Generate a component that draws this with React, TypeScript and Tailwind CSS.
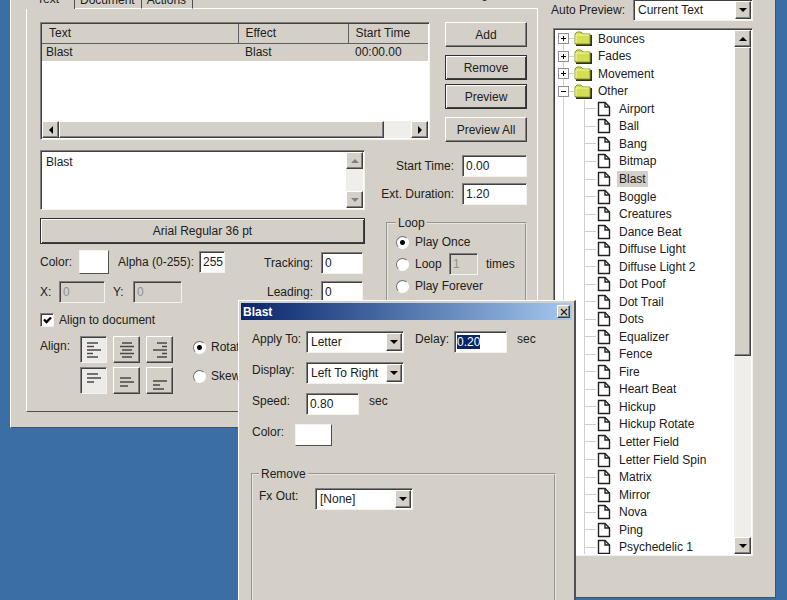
import React, { useEffect, useRef, useState } from 'react';

const RAISED = 'bg-[#d4d0c8] border border-t-white border-l-white border-r-[#404040] border-b-[#404040] shadow-[inset_-1px_-1px_0_#808080]';
const SUNKEN = 'border border-t-[#808080] border-l-[#808080] border-r-[#f4f2ee] border-b-[#f4f2ee] shadow-[inset_1px_1px_0_#404040]';
const DEFAULT_BTN = 'bg-[#d4d0c8] border border-[#303030] shadow-[inset_1px_1px_0_#fff,inset_-1px_-1px_0_#404040]';
const RADIO =
  'appearance-none w-[13px] h-[13px] shrink-0 rounded-full bg-white border border-t-[#707070] border-l-[#707070] border-r-white border-b-white checked:bg-[radial-gradient(circle,#000_2px,#fff_3px)]';

const folders = ['Bounces', 'Fades', 'Movement', 'Other'];

const effects = [
  'Airport', 'Ball', 'Bang', 'Bitmap', 'Blast', 'Boggle', 'Creatures', 'Dance Beat',
  'Diffuse Light', 'Diffuse Light 2', 'Dot Poof', 'Dot Trail', 'Dots', 'Equalizer',
  'Fence', 'Fire', 'Heart Beat', 'Hickup', 'Hickup Rotate', 'Letter Field',
  'Letter Field Spin', 'Matrix', 'Mirror', 'Nova', 'Ping', 'Psychedelic 1',
];

type Dir = 'up' | 'down' | 'left' | 'right';

const arrows: Record<Dir, string> = {
  up: 'M0 6 L4 2 L8 6 Z',
  down: 'M0 2 L8 2 L4 6 Z',
  left: 'M6 0 L2 4 L6 8 Z',
  right: 'M2 0 L6 4 L2 8 Z',
};

function Arrow({ dir, muted }: { dir: Dir; muted?: boolean }) {
  return (
    <svg width="8" height="8" viewBox="0 0 8 8">
      <path d={arrows[dir]} fill={muted ? '#808080' : '#000'} />
    </svg>
  );
}

function ScrollButton({ dir, muted }: { dir: Dir; muted?: boolean }) {
  return (
    <button
      type="button"
      aria-label={`Scroll ${dir}`}
      disabled={muted}
      className={`flex h-[17px] w-[17px] shrink-0 items-center justify-center ${RAISED}`}
    >
      <Arrow dir={dir} muted={muted} />
    </button>
  );
}

function Select({ id, options, className }: { id: string; options: string[]; className: string }) {
  return (
    <div className={`relative h-[22px] bg-white p-px ${SUNKEN} ${className}`}>
      <select id={id} className="h-full w-full appearance-none pl-[3px] pr-4 outline-none">
        {options.map((o) => (
          <option key={o}>{o}</option>
        ))}
      </select>
      <span className={`pointer-events-none absolute inset-y-px right-px flex w-4 items-center justify-center ${RAISED}`}>
        <Arrow dir="down" />
      </span>
    </div>
  );
}

function Field({ id, value, disabled, className }: { id: string; value: string; disabled?: boolean; className: string }) {
  return (
    <input
      id={id}
      type="text"
      defaultValue={value}
      disabled={disabled}
      className={`h-[22px] min-w-0 pl-[3px] outline-none ${SUNKEN} ${disabled ? 'bg-[#d4d0c8] text-[#909090]' : 'bg-white'} ${className}`}
    />
  );
}

// each line is an x1/x2 pair, top to bottom
const alignIcons = [
  { name: 'Left', lines: [[1, 12], [1, 8], [1, 15], [1, 7], [1, 12]], top: 2, step: 3.5 },
  { name: 'Center', lines: [[3, 13], [1, 15], [3, 13], [1, 15], [3, 13]], top: 2, step: 3.5 },
  { name: 'Right', lines: [[5, 15], [10, 15], [1, 15], [10, 15], [5, 15]], top: 2, step: 3.5 },
  { name: 'Top', lines: [[1, 12], [1, 15], [1, 8]], top: 2, step: 4 },
  { name: 'Middle', lines: [[1, 12], [1, 15], [1, 9]], top: 6, step: 4 },
  { name: 'Bottom', lines: [[1, 15], [1, 8], [1, 12]], top: 9, step: 4 },
];

function AlignButton({ index }: { index: number }) {
  const { name, lines, top, step } = alignIcons[index];
  const pressed = index % 3 === 0;
  return (
    <button
      type="button"
      aria-label={`Align ${name}`}
      aria-pressed={pressed}
      className={`flex h-[27px] w-[27px] items-center justify-center ${pressed ? `bg-[#ecebe7] ${SUNKEN}` : RAISED}`}
    >
      <svg width="16" height="18" viewBox="0 0 16 18" stroke="#484848" strokeWidth="1.5">
        {lines.map(([x1, x2], i) => (
          <path key={i} d={`M${x1} ${top + i * step} H${x2}`} />
        ))}
      </svg>
    </button>
  );
}

function Tree() {
  return (
    <div className={`flex h-[528px] bg-white p-px ${SUNKEN}`}>
      <div className="min-w-0 flex-1 overflow-hidden">
        <ul className="flex h-[526px] flex-col leading-[14px]">
          {folders.map((name, i) => (
            <li key={name} className="flex flex-1 items-center">
              <div className="ml-[3px] grid h-full w-[11px] items-center justify-items-center">
                <span className={`col-start-1 row-start-1 w-px bg-[#d0d0d0] ${i === 0 ? 'h-1/2 self-end' : 'h-full'}`} />
                <button
                  type="button"
                  aria-label={`Toggle ${name}`}
                  className="col-start-1 row-start-1 h-[11px] w-[11px] border border-[#909090] bg-white"
                >
                  <svg width="9" height="9" viewBox="0 0 9 9" stroke="#000">
                    <path d={i === 3 ? 'M2 4.5 H7' : 'M2 4.5 H7 M4.5 2 V7'} />
                  </svg>
                </button>
              </div>
              <span className="h-px w-[5px] bg-[#d0d0d0]" />
              <svg width="18" height="15" viewBox="0 0 18 15">
                <path d="M2 14 H17 V4" fill="none" stroke="#303010" strokeWidth="2" />
                <path d="M1 13 V3 L3 1 H7 L9 3 H16 V13 Z" fill="#d3df52" stroke="#8c9430" />
                <path d="M2 12 V4 H15" fill="none" stroke="#f4f8b0" />
              </svg>
              <span className="ml-1 px-[2px]">{name}</span>
            </li>
          ))}
          {effects.map((name) => (
            <li key={name} className="flex flex-1 items-center whitespace-nowrap">
              <span className="ml-2 w-[21px] self-stretch border-l border-[#d0d0d0]" />
              <span className="w-px self-stretch bg-[#d0d0d0]" />
              <span className="mr-px h-px w-[11px] bg-[#d0d0d0]" />
              <svg width="14" height="16" viewBox="0 0 14 16">
                <path d="M1.5 1.5 H8 L12.5 6 V14.5 H1.5 Z" fill="#fff" stroke="#202020" strokeWidth="1.4" />
                <path d="M8 1.5 V6 H12.5" fill="none" stroke="#202020" strokeWidth="1.4" />
              </svg>
              <span className={`ml-[6px] px-[2px] ${name === 'Blast' ? 'bg-[#d4d0c8] py-px' : ''}`}>{name}</span>
            </li>
          ))}
        </ul>
      </div>
      <div className="flex w-[17px] flex-col bg-[#efeeea]">
        <ScrollButton dir="up" />
        <div className={`h-[309px] ${RAISED}`} />
        <div className="flex-1" />
        <ScrollButton dir="down" />
      </div>
    </div>
  );
}

function EffectsWindow() {
  return (
    <div className="absolute -top-5 left-[540px] right-[11px] border-b border-r border-[#505050] bg-[#d4d0c8] pb-[41px] pl-[13px] pr-[22px] pt-[19px]">
      <div className="mb-[7px] flex items-center justify-between">
        <label htmlFor="auto-preview" className="-ml-[2px] whitespace-nowrap">Auto Preview:</label>
        <Select id="auto-preview" options={['Current Text', 'All Text']} className="w-[120px]" />
      </div>
      <Tree />
    </div>
  );
}

function TextList() {
  return (
    <div className={`flex h-[118px] flex-1 flex-col bg-white p-px ${SUNKEN}`}>
      <table className="w-full table-fixed border-collapse text-left">
        <thead>
          <tr className="h-[19px] bg-[#d4d0c8]">
            <th className="w-[196px] border-b border-r border-[#606060] pl-[7px] font-normal">Text</th>
            <th className="w-[110px] border-b border-r border-[#606060] pl-[7px] font-normal">Effect</th>
            <th className="border-b border-[#606060] pl-[7px] font-normal">Start Time</th>
          </tr>
        </thead>
        <tbody>
          <tr className="h-[18px] bg-[#d4d0c8]">
            <td className="pl-1">Blast</td>
            <td className="pl-[7px]">Blast</td>
            <td className="pl-[7px]">00:00.00</td>
          </tr>
        </tbody>
      </table>
      <div className="mt-auto flex bg-[#efeeea]">
        <ScrollButton dir="left" />
        <div className={`flex-1 ${RAISED}`} />
        <div className="w-[27px]" />
        <ScrollButton dir="right" />
      </div>
    </div>
  );
}

function TextOptions() {
  return (
    <div className="w-[325px]">
      <div className={`flex h-[60px] bg-white p-px ${SUNKEN}`}>
        <textarea aria-label="Text" defaultValue="Blast" className="flex-1 resize-none pl-1 pt-[2px] outline-none" />
        <div className="flex flex-col justify-between bg-[#efeeea]">
          <ScrollButton dir="up" muted />
          <ScrollButton dir="down" muted />
        </div>
      </div>
      <button type="button" className={`mt-2 h-[26px] w-full ${DEFAULT_BTN}`}>Arial Regular 36 pt</button>

      <div className="mt-[6px] flex justify-between pr-[2px]">
        <div>
          <div className="flex h-6 items-center">
            <label htmlFor="color" className="w-[39px]">Color:</label>
            <button id="color" type="button" aria-label="Text color" className="h-6 w-[30px] border border-b-[#505050] border-l-[#f4f2ee] border-r-[#505050] border-t-[#f4f2ee] bg-white" />
            <label htmlFor="alpha" className="ml-[9px] w-[81px] whitespace-nowrap">Alpha (0-255):</label>
            <Field id="alpha" value="255" className="w-[26px]" />
          </div>
          <div className="mt-[7px] flex items-center">
            <label htmlFor="pos-x" className="w-[19px]">X:</label>
            <Field id="pos-x" value="0" disabled className="w-[46px]" />
            <label htmlFor="pos-y" className="ml-2 w-5">Y:</label>
            <Field id="pos-y" value="0" disabled className="w-[49px]" />
          </div>
        </div>
        <div className="flex flex-col items-end gap-[7px] pt-[2px]">
          <div className="flex items-center gap-2">
            <label htmlFor="tracking">Tracking:</label>
            <Field id="tracking" value="0" className="w-[42px]" />
          </div>
          <div className="flex items-center gap-2">
            <label htmlFor="leading">Leading:</label>
            <Field id="leading" value="0" className="w-[42px]" />
          </div>
        </div>
      </div>

      <div className="mt-[9px] flex items-center">
        <span className="grid items-center justify-items-center">
          <input id="align-doc" type="checkbox" defaultChecked className={`peer col-start-1 row-start-1 h-[14px] w-[14px] appearance-none bg-white ${SUNKEN}`} />
          <svg width="9" height="9" viewBox="0 0 9 9" className="pointer-events-none invisible col-start-1 row-start-1 peer-checked:visible">
            <path d="M1 3.5 L3.5 6 L8 1.5" fill="none" stroke="#000" strokeWidth="2.4" />
          </svg>
        </span>
        <label htmlFor="align-doc" className="ml-[5px]">Align to document</label>
      </div>

      <div className="mt-2 flex">
        <span className="w-10 pt-[2px]">Align:</span>
        <div className="grid grid-cols-3 gap-x-[6px] gap-y-1">
          {alignIcons.map((icon, i) => (
            <AlignButton key={icon.name} index={i} />
          ))}
        </div>
        <div className="ml-5 flex flex-col pt-[3px]">
          <label className="mb-[13px] flex items-center gap-[5px]">
            <input type="radio" name="transform" defaultChecked className={RADIO} />
            Rotate
          </label>
          <label className="flex items-center gap-[5px]">
            <input type="radio" name="transform" className={RADIO} />
            Skew
          </label>
        </div>
      </div>
    </div>
  );
}

function TimingOptions() {
  return (
    <div className="ml-auto w-[141px] pt-[5px]">
      <div className="mb-[6px] flex items-center justify-end gap-2">
        <label htmlFor="start" className="whitespace-nowrap">Start Time:</label>
        <Field id="start" value="0.00" className="w-[65px]" />
      </div>
      <div className="flex items-center justify-end gap-2">
        <label htmlFor="duration" className="whitespace-nowrap">Ext. Duration:</label>
        <Field id="duration" value="1.20" className="w-[65px] shrink-0" />
      </div>
      <fieldset className="mt-[10px] h-[104px] border-2 border-[#e8e6e0] pl-[8px] [border-style:groove]">
        <legend className="px-[2px]">Loop</legend>
        <label className="flex h-[22px] items-center gap-[6px]">
          <input type="radio" name="loop" defaultChecked className={RADIO} />
          Play Once
        </label>
        <div className="flex h-[22px] items-center">
          <input id="loop-n" type="radio" name="loop" className={RADIO} />
          <label htmlFor="loop-n" className="ml-[6px] w-[34px]">Loop</label>
          <input aria-label="Loop count" defaultValue="1" disabled className={`h-[22px] w-[29px] bg-[#d4d0c8] pl-[3px] text-[#909090] ${SUNKEN}`} />
          <span className="ml-2">times</span>
        </div>
        <label className="flex h-[22px] items-center gap-[6px]">
          <input type="radio" name="loop" className={RADIO} />
          Play Forever
        </label>
      </fieldset>
    </div>
  );
}

function MainWindow() {
  const [tab, setTab] = useState('Text');
  return (
    <div className="absolute -top-5 left-[10px] right-[247px] border-b border-l border-b-[#505050] border-l-white bg-[#d4d0c8] pb-[15px] pl-[15px] pr-[2px]">
      <div className="flex h-[29px] items-end">
        {['Text', 'Document', 'Actions'].map((t) => (
          <button
            key={t}
            type="button"
            onClick={() => setTab(t)}
            className={`flex h-7 items-end border-r border-r-[#505050] ${t === tab ? 'w-[49px] pb-[2px] pl-[11px]' : 'border-b border-b-white pl-[5px] pr-[6px]'}`}
          >
            {t}
          </button>
        ))}
        <span className="flex-1 border-b border-white pb-[6px] pr-[50px] text-right">g</span>
      </div>
      <div className="border-b border-l border-r border-b-[#505050] border-l-white border-r-white pb-[17px] pl-[13px] pr-[10px] pt-[13px]">
        <div className="flex items-start gap-[15px]">
          <TextList />
          <div className="flex w-[82px] flex-col">
            <button type="button" className={`h-[25px] ${RAISED}`}>Add</button>
            <button type="button" className={`mt-2 h-[25px] ${DEFAULT_BTN}`}>Remove</button>
            <button type="button" className={`mt-1 h-[25px] ${DEFAULT_BTN}`}>Preview</button>
            <button type="button" className={`mt-2 h-[25px] ${RAISED}`}>Preview All</button>
          </div>
        </div>
        <div className="mt-2 flex">
          <TextOptions />
          <TimingOptions />
        </div>
      </div>
    </div>
  );
}

function BlastDialog() {
  const delayRef = useRef<HTMLInputElement>(null);

  useEffect(() => {
    delayRef.current?.focus();
    delayRef.current?.select();
  }, []);

  return (
    <div
      role="dialog"
      aria-label="Blast"
      className="absolute bottom-0 left-[238px] top-[300px] w-[338px] border-l border-r-2 border-t border-l-white border-r-[#505050] border-t-white bg-[#d4d0c8] p-[2px]"
    >
      <div className="flex h-[17px] items-center justify-between bg-linear-to-r from-[#0a246a] to-[#a6caf0] px-[2px]">
        <span className="font-bold text-white">Blast</span>
        <button type="button" aria-label="Close" className={`flex h-[13px] w-[13px] items-center justify-center ${RAISED}`}>
          <svg width="8" height="8" viewBox="0 0 8 8" stroke="#202020" strokeWidth="1.3">
            <path d="M1 1 L7 7 M7 1 L1 7" />
          </svg>
        </button>
      </div>

      <div className="flex flex-col gap-[9px] pl-[11px] pt-[11px]">
        <div className="flex items-center">
          <label htmlFor="apply-to" className="w-[54px] pb-[6px]">Apply To:</label>
          <Select id="apply-to" options={['Letter', 'Word', 'Line']} className="w-[98px]" />
          <label htmlFor="delay" className="ml-[11px] w-[39px] pb-[6px]">Delay:</label>
          <input
            id="delay"
            ref={delayRef}
            type="text"
            defaultValue="0.20"
            className={`h-[22px] w-[53px] bg-white pl-[2px] outline-none selection:bg-[#0a246a] selection:text-white ${SUNKEN}`}
          />
          <span className="ml-[10px] pb-[6px]">sec</span>
        </div>
        <div className="flex items-center">
          <label htmlFor="display" className="w-[54px] pb-[6px]">Display:</label>
          <Select id="display" options={['Left To Right', 'Right To Left']} className="w-[98px]" />
        </div>
        <div className="flex items-center">
          <label htmlFor="speed" className="w-[54px] pb-[6px]">Speed:</label>
          <Field id="speed" value="0.80" className="w-[53px]" />
          <span className="ml-[10px] pb-[6px]">sec</span>
        </div>
        <div className="flex items-center">
          <label htmlFor="fx-color" className="w-[43px] pb-[6px]">Color:</label>
          <button id="fx-color" type="button" aria-label="Effect color" className="h-[22px] w-[37px] border border-b-[#505050] border-l-[#f4f2ee] border-r-[#505050] border-t-[#f4f2ee] bg-white" />
        </div>
      </div>

      <fieldset className="ml-[10px] mr-[16px] mt-5 h-[140px] border-2 border-[#e8e6e0] pl-[6px] [border-style:groove]">
        <legend className="px-[2px]">Remove</legend>
        <div className="mt-[6px] flex items-center">
          <label htmlFor="fx-out" className="w-[56px] pb-[6px]">Fx Out:</label>
          <Select id="fx-out" options={['[None]', 'Blast']} className="w-[98px]" />
        </div>
      </fieldset>
    </div>
  );
}

export default function App() {
  return (
    <div className="relative h-screen w-full overflow-hidden bg-[#3a6ea5] font-['Liberation_Sans',Arial,sans-serif] text-[12px] leading-4 text-[#202020]">
      <EffectsWindow />
      <MainWindow />
      <BlastDialog />
    </div>
  );
}
